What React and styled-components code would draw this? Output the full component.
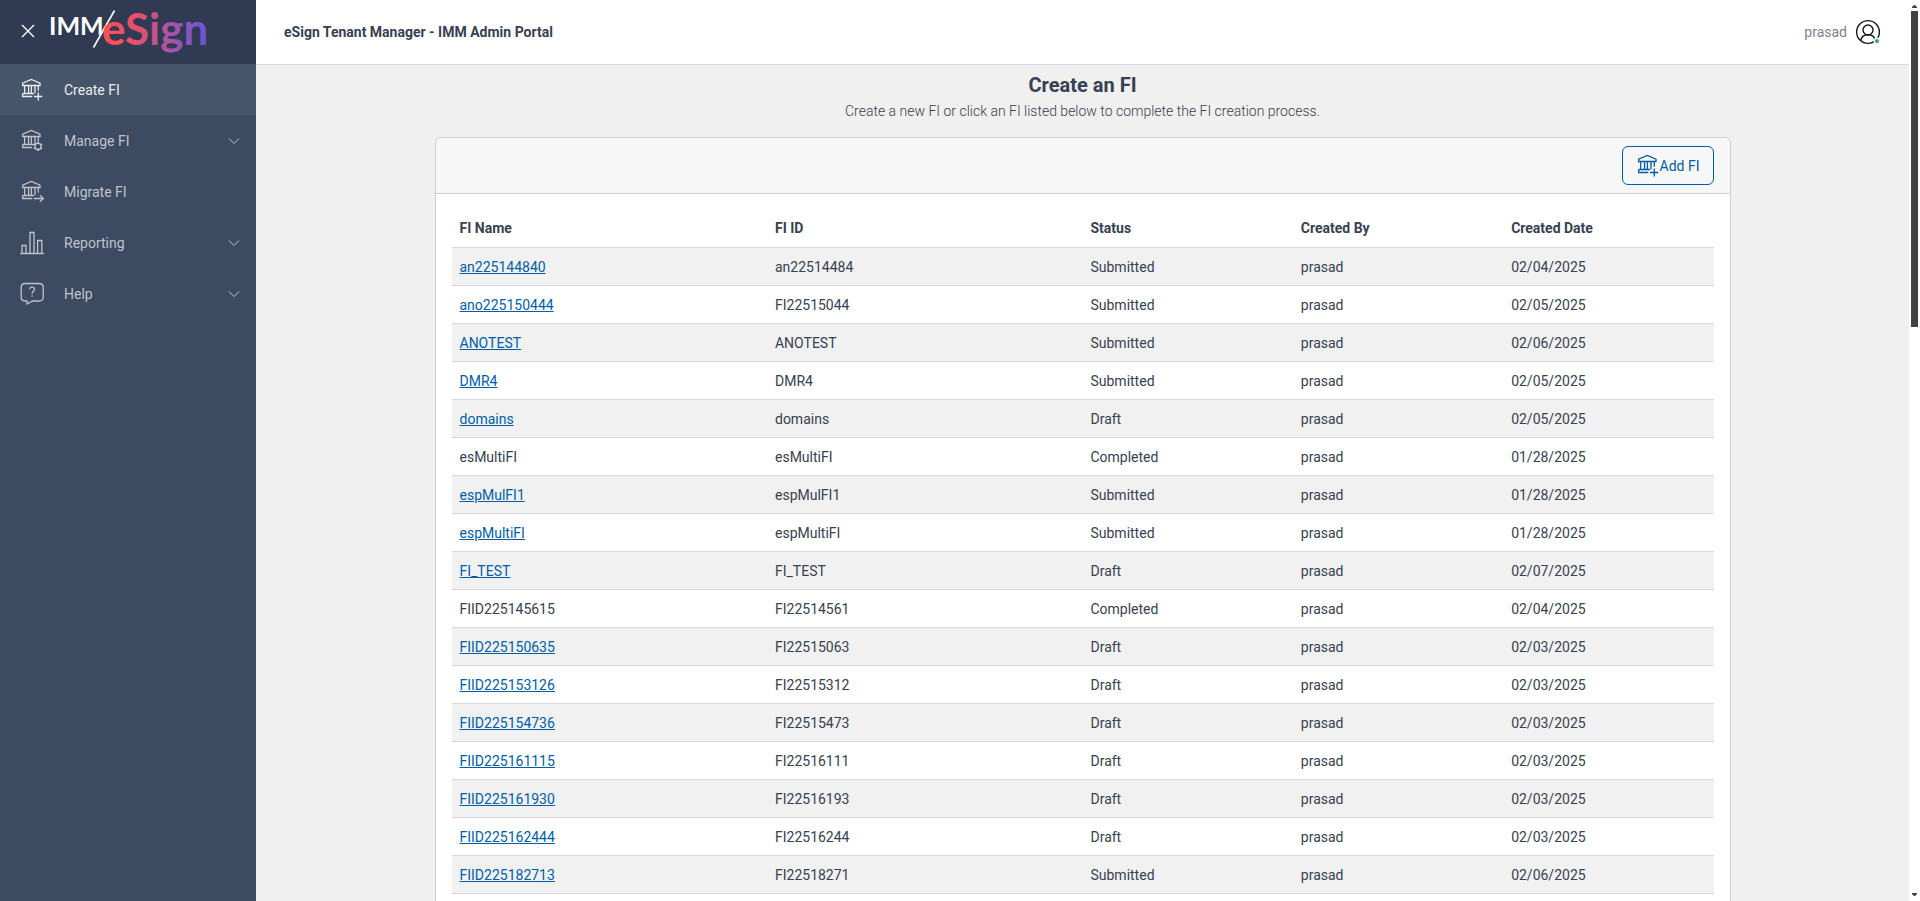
import React from "react";
import styled, { createGlobalStyle, css } from "styled-components";

const GlobalStyle = createGlobalStyle`
  *, *::before, *::after { box-sizing: border-box; }
  body {
    margin: 0;
    background: #f0f0f0;
    color: #374151;
    font-family: Roboto, "Liberation Sans", sans-serif;
    font-size: 14px;
    line-height: 21px;
  }
`;

const Shell = styled.div`
  display: flex;
  height: 100vh;
  overflow: hidden;
`;

const Sidebar = styled.aside`
  flex: 0 0 256px;
  background: #3c4a62;
`;

const Brand = styled.div`
  display: flex;
  align-items: center;
  height: 64px;
  padding-left: 20px;
  background: #303b53;
`;

const CloseButton = styled.button`
  display: flex;
  padding: 0;
  border: 0;
  background: none;
  color: #fff;
  cursor: pointer;
`;

const Logo = styled.svg`
  margin-left: 12px;
  font-family: Lato, "Liberation Sans", sans-serif;
`;

const NavButton = styled.button`
  display: flex;
  align-items: center;
  gap: 20px;
  width: 100%;
  height: 51px;
  padding: 1px 16px 0 20px;
  border: 0;
  background: ${(p) => (p.$active ? "#47556a" : "transparent")};
  color: ${(p) => (p.$active ? "#e9ebee" : "#bfc4cc")};
  font: inherit;
  text-align: left;
  cursor: pointer;
`;

const NavLabel = styled.span`
  flex: 1;
  padding-top: 1px;
`;

const Content = styled.div`
  display: flex;
  flex: 1;
  flex-direction: column;
  min-width: 0;
`;

const TopBar = styled.header`
  display: flex;
  flex: none;
  align-items: center;
  justify-content: space-between;
  height: 65px;
  padding: 0 28px;
  border-bottom: 1px solid #d5d9e0;
  background: #fff;
`;

const PortalName = styled.h1`
  margin: 0;
  font-size: 14px;
  font-weight: 700;
`;

const UserButton = styled.button`
  display: flex;
  align-items: center;
  gap: 8px;
  padding: 0;
  border: 0;
  background: none;
  color: #7c8290;
  font: inherit;
  cursor: pointer;
`;

const Main = styled.main`
  display: flex;
  flex: 1;
  flex-direction: column;
  align-items: center;
  min-height: 0;
  padding: 8px 12px 0;
  background: #f0f0f0;
`;

const PageTitle = styled.h2`
  margin: 0 0 4px;
  font-size: 20px;
  font-weight: 700;
  line-height: 24px;
`;

const Intro = styled.p`
  margin: 0 0 16px;
  font-weight: 300;
  line-height: 20px;
`;

const Card = styled.section`
  flex: 1 0 auto;
  width: 100%;
  max-width: 1296px;
  border: 1px solid #cfcfcf;
  border-bottom: 0;
  border-radius: 6px 6px 0 0;
  background: #fff;
`;

const CardHeader = styled.div`
  display: flex;
  justify-content: flex-end;
  padding: 8px 16px;
  border-bottom: 1px solid #cfcfcf;
  border-radius: 6px 6px 0 0;
  background: #f7f7f7;
`;

const AddButton = styled.button`
  display: flex;
  align-items: center;
  height: 39px;
  padding: 1px 13px 0;
  border: 1px solid #005ea6;
  border-radius: 6px;
  background: transparent;
  color: #005ea6;
  font: inherit;
  cursor: pointer;
`;

const CardBody = styled.div`
  padding: 16px;
`;

const Table = styled.table`
  width: 100%;
  table-layout: fixed;
  border-collapse: separate;
  border-spacing: 0;
`;

const cell = css`
  padding: 8px;
  border-bottom: 1px solid #d8dadc;
  text-align: left;
`;

const HeadCell = styled.th`
  ${cell}
  width: ${(p) => p.$width};
  font-weight: 700;
`;

const Cell = styled.td`
  ${cell}
  padding-top: 9px;
  padding-bottom: 7px;
`;

const Row = styled.tr`
  &:nth-child(odd) {
    background: #f1f1f1;
  }
`;

const FiLink = styled.a`
  color: #005ea6;
  text-decoration: underline;
`;

const ScrollTrack = styled.div`
  display: flex;
  flex: 0 0 11px;
  flex-direction: column;
  align-items: center;
  justify-content: space-between;
  padding: 5px 0;
  background: #fff;
`;

const ScrollThumb = styled.div`
  flex: 0 0 35.5%;
  width: 7px;
  margin: 3px 0 auto;
  background: #424242;
`;

const Icon = ({ children, left = 0 }) => (
  <svg
    width="24"
    height="24"
    viewBox={`${left} 0 24 24`}
    fill="none"
    stroke="currentColor"
    strokeWidth="1.3"
    aria-hidden="true"
  >
    {children}
  </svg>
);

const badges = {
  plus: <path d="M17.3 14.5V22.4M13 18.5H21.3" />,
  gear: (
    <>
      <circle cx="17" cy="17.4" r="3.1" />
      <path
        d="M17 12.8V14.6M17 20.2V22M13 15.1L14.6 16M19.4 18.8L21 19.7M13 19.7L14.6 18.8M19.4 16L21 15.1"
        strokeWidth="1.8"
      />
    </>
  ),
  arrow: <path d="M12.8 18.5H22M18.9 15.1L22.3 18.5L18.9 21.9" />,
};

const BankIcon = ({ badge }) => (
  <Icon left={-1}>
    <path d="M1.6 7.5V5.2L10.3 1.5L19 5.2V7.5Z" />
    <path d="M3.6 7.5V15.3M7.6 7.5V15.3M10.4 7.5V15.3M14 7.5V15.3M17.3 7.5V12.8M1.6 15.5H13" />
    <path d="M1.6 15.5V18.5H11.3" />
    {badges[badge]}
  </Icon>
);

const ReportIcon = () => (
  <Icon>
    <path d="M0.3 22.5H23.8M2 22.5V14.5H6V22.5M10 22.5V1.5H14V22.5M17.6 22.5V9.5H21.8V22.5" />
  </Icon>
);

const HelpIcon = () => (
  <Icon>
    <path d="M5 1.5H19Q23.2 1.5 23.2 5.5V15Q23.2 19 19 19H12.5L7 22V19H5Q1.2 19 1.2 15V5.5Q1.2 1.5 5 1.5Z" />
    <path d="M9.8 7.3Q9.9 5.2 12.1 5.2Q14.4 5.2 14.4 7.3Q14.4 8.5 13.2 9.4Q12.1 10.2 12.1 11.8M12.1 13.2V14.8" />
  </Icon>
);

const Chevron = () => (
  <svg width="12" height="8" viewBox="0 0 12 8" fill="none" stroke="currentColor" aria-hidden="true">
    <path d="M1 1.5L6 6.5L11 1.5" />
  </svg>
);

const navItems = [
  { label: "Create FI", icon: <BankIcon badge="plus" />, active: true },
  { label: "Manage FI", icon: <BankIcon badge="gear" />, expandable: true },
  { label: "Migrate FI", icon: <BankIcon badge="arrow" /> },
  { label: "Reporting", icon: <ReportIcon />, expandable: true },
  { label: "Help", icon: <HelpIcon />, expandable: true },
];

const columns = [
  ["FI Name", "25%"],
  ["FI ID", "25%"],
  ["Status", "16.6667%"],
  ["Created By", "16.6667%"],
  ["Created Date", "16.6667%"],
];

const rows = [
  ["an225144840", "an22514484", "Submitted", "02/04/2025"],
  ["ano225150444", "FI22515044", "Submitted", "02/05/2025"],
  ["ANOTEST", "ANOTEST", "Submitted", "02/06/2025"],
  ["DMR4", "DMR4", "Submitted", "02/05/2025"],
  ["domains", "domains", "Draft", "02/05/2025"],
  ["esMultiFI", "esMultiFI", "Completed", "01/28/2025"],
  ["espMulFI1", "espMulFI1", "Submitted", "01/28/2025"],
  ["espMultiFI", "espMultiFI", "Submitted", "01/28/2025"],
  ["FI_TEST", "FI_TEST", "Draft", "02/07/2025"],
  ["FIID225145615", "FI22514561", "Completed", "02/04/2025"],
  ["FIID225150635", "FI22515063", "Draft", "02/03/2025"],
  ["FIID225153126", "FI22515312", "Draft", "02/03/2025"],
  ["FIID225154736", "FI22515473", "Draft", "02/03/2025"],
  ["FIID225161115", "FI22516111", "Draft", "02/03/2025"],
  ["FIID225161930", "FI22516193", "Draft", "02/03/2025"],
  ["FIID225162444", "FI22516244", "Draft", "02/03/2025"],
  ["FIID225182713", "FI22518271", "Submitted", "02/06/2025"],
];

export default function App() {
  return (
    <>
      <GlobalStyle />
      <Shell>
        <Sidebar>
          <Brand>
            <CloseButton aria-label="Close menu">
              <svg width="16" height="16" viewBox="0 0 16 16" stroke="currentColor" strokeWidth="1.4" aria-hidden="true">
                <path d="M2 1L14 13M14 1L2 13" />
              </svg>
            </CloseButton>
            <Logo width="160" height="64" viewBox="0 0 160 64">
              <defs>
                <linearGradient id="brand" gradientUnits="userSpaceOnUse" x1="56" y1="0" x2="157" y2="0">
                  <stop offset="0.1" stopColor="#ff4f58" />
                  <stop offset="0.35" stopColor="#e0506f" />
                  <stop offset="0.65" stopColor="#a855a4" />
                  <stop offset="1" stopColor="#6a55d8" />
                </linearGradient>
              </defs>
              <text x="1" y="35" fontSize="25" fontWeight="700" fill="#fff">IMM</text>
              <path d="M45.5 47.5L66.5 10.5" stroke="#fff" strokeWidth="1.6" />
              <text x="54" y="45" fontSize="44" fontWeight="700" fill="url(#brand)">eSign</text>
            </Logo>
          </Brand>
          <nav>
            {navItems.map((item) => (
              <NavButton key={item.label} $active={item.active}>
                {item.icon}
                <NavLabel>{item.label}</NavLabel>
                {item.expandable && <Chevron />}
              </NavButton>
            ))}
          </nav>
        </Sidebar>
        <Content>
          <TopBar>
            <PortalName>eSign Tenant Manager - IMM Admin Portal</PortalName>
            <UserButton>
              prasad
              <svg width="26" height="26" viewBox="0 0 26 26" fill="none" stroke="#14171c" strokeWidth="1.4" aria-hidden="true">
                <circle cx="13" cy="13" r="11.4" />
                <circle cx="13" cy="11" r="5" />
                <path d="M5.6 21.5C6.5 17.8 9.2 15.8 13 15.8S19.5 17.8 20.4 21.5" />
                <circle cx="22" cy="22" r="2.8" fill="#2fb457" stroke="#fff" />
              </svg>
            </UserButton>
          </TopBar>
          <Main>
            <PageTitle>Create an FI</PageTitle>
            <Intro>Create a new FI or click an FI listed below to complete the FI creation process.</Intro>
            <Card>
              <CardHeader>
                <AddButton>
                  <BankIcon badge="plus" />
                  Add FI
                </AddButton>
              </CardHeader>
              <CardBody>
                <Table>
                  <thead>
                    <tr>
                      {columns.map(([label, width]) => (
                        <HeadCell key={label} $width={width} scope="col">{label}</HeadCell>
                      ))}
                    </tr>
                  </thead>
                  <tbody>
                    {rows.map(([name, id, status, date]) => (
                      <Row key={name}>
                        <Cell>{status === "Completed" ? name : <FiLink href="#">{name}</FiLink>}</Cell>
                        <Cell>{id}</Cell>
                        <Cell>{status}</Cell>
                        <Cell>prasad</Cell>
                        <Cell>{date}</Cell>
                      </Row>
                    ))}
                  </tbody>
                </Table>
              </CardBody>
            </Card>
          </Main>
        </Content>
        <ScrollTrack aria-hidden="true">
          <svg width="5" height="3" viewBox="0 0 5 3" fill="#424242"><path d="M0 3V2L2 0H3L5 2V3Z" /></svg>
          <ScrollThumb />
          <svg width="5" height="3" viewBox="0 0 5 3" fill="#424242"><path d="M0 0V1L2 3H3L5 1V0Z" /></svg>
        </ScrollTrack>
      </Shell>
    </>
  );
}
